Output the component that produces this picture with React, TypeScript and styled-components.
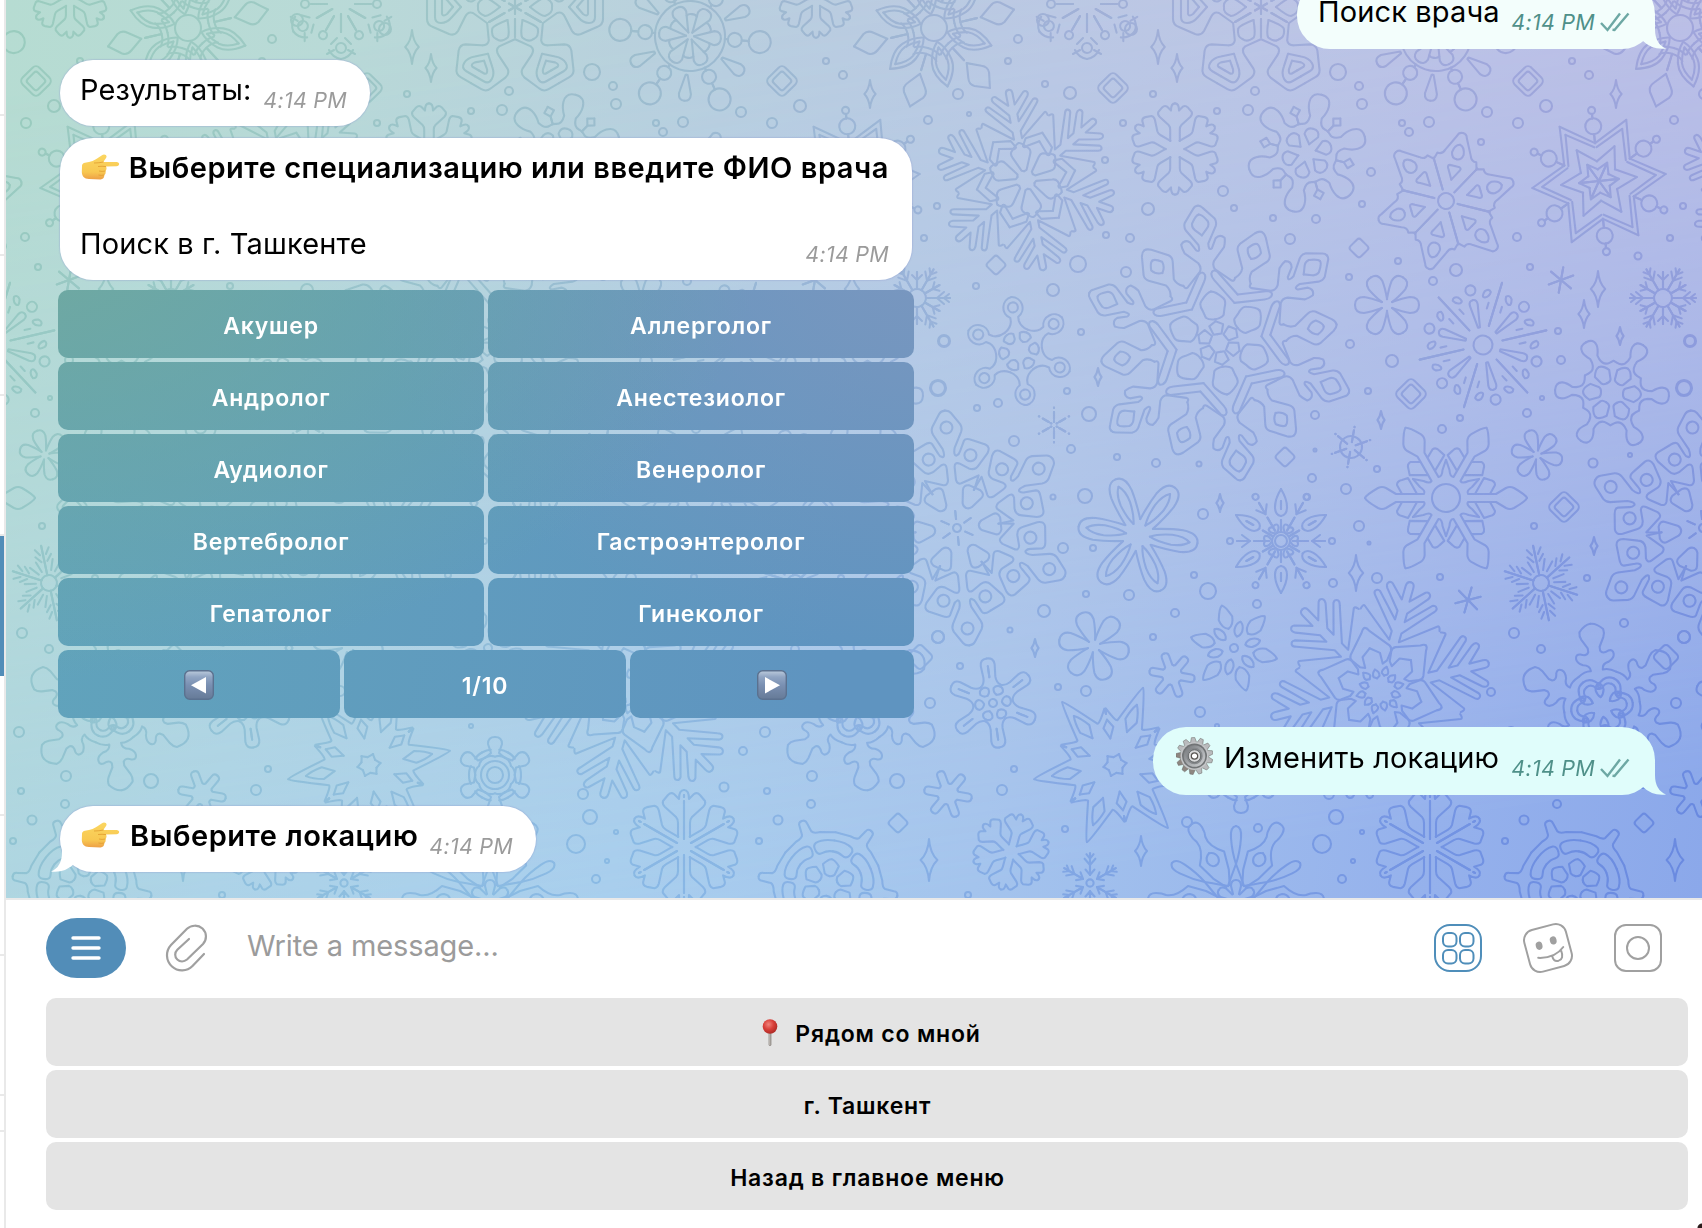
import React from "react";
import styled, { createGlobalStyle } from "styled-components";

const GlobalStyle = createGlobalStyle`
  * {
    box-sizing: border-box;
  }

  body {
    margin: 0;
    background: #fff;
    font-family: Inter, "Liberation Sans", sans-serif;
    color: #000;
  }
`;

/* ---------- wallpaper ---------- */

type Ring = [number, number];

type FlakeData = {
  at: [number, number];
  rot?: number;
  s?: number;
  // half of an arm that points up, mirrored to get the other half
  arm?: string;
  // same, but for the gap between two arms
  gap?: string;
  armRings?: Ring[];
  gapRings?: Ring[];
  core?: number[];
};

const BRANCH =
  "M0-57Q-5-57-5-48L-10-53Q-13-55-16-52L-21-46Q-22-43-19-40L-8-30Q-6-28-6-24V-10";
const FERN =
  "M0-112Q-4-112-4-107V-93L-17-106Q-20-108-22-105Q-23-103-21-100L-5-81V-72L-27-95Q-30-97-32-94Q-33-92-30-89L-5-60V-51L-38-77Q-40-78-41-73";
const PETAL = "M0-32Q-8-32-8-23Q-7-16-3-5";
const BLOB = "M0-24Q-4-24-4-20L-4-10L-5-9";
const MINI = "M0-9V-33M0-20L-6-27M0-27L-4-32";
const STICK = "M0 0V-13";

const FLAKES: FlakeData[] = [
  {
    at: [1261, 7],
    rot: 30,
    arm: "M0-88L-12-88Q-18-88-20-82L-27-66Q-29-60-24-57L-10-50Q-4-47-6-42L-16-28M0-80H-10Q-16-80-16-74Q-16-68-10-63L0-54M0-73H-7Q-10-72-7-68L0-62M0-37Q-6-38-9-30Q-9-26 0-15",
    gap: "M0-12V-30M0 0V-7",
  },
  {
    at: [1436, 36],
    rot: 35,
    arm: "M0-31Q-7-31-7-24L0-4M0-52V-59M0-35V-38",
    gap: "M0-65Q-6-65-6-58L-1-39H0M0-22Q-4-22-5-20",
    armRings: [
      [-45, 7],
      [-70, 11],
    ],
    core: [35],
  },
  {
    at: [934, 28],
    rot: 47,
    arm: "M0-60Q-12-46-10-34Q-8-22 0-14M0-53Q-7-43-6-34Q-4-26 0-20",
    gap: "M0-82L-10-70Q-13-65-9-60L0-48M0-44V-28M0-27Q-8-27-12-31M0-21Q-8-21-13-24",
    core: [13],
  },
  { at: [1175, 149], rot: 0, s: 0.8, arm: BRANCH },
  {
    at: [1307, 153],
    rot: 14,
    arm: "M0-60Q-10-60-10-50Q-10-44-6-37Q-6-28-12-27L-15-26M0-25Q-7-25-7-18L0-9",
    gap: "M0-30V-38M0-48L-5-43L0-38",
  },
  {
    at: [1446, 201],
    rot: 14,
    arm: "M0-70Q-4-70-5-66L-13-50Q-15-44-20-45L-22-38M0-58Q-5-57-6-49Q-5-43 0-43M0-36H-5Q-8-35-5-31L0-22",
    gap: "M0-12V-45",
    core: [8],
  },
  {
    at: [1599, 181],
    rot: 24,
    arm: "M0-67L-19-33M0-57L-16-30M0-38L-10-17M0-20L-6-10M0-20V0",
    gap: "M0-38V-47M0-63V-67",
    gapRings: [
      [-55, 8],
      [-71, 3.5],
    ],
  },
  {
    at: [1219, 343],
    rot: -9,
    arm: "M0-139Q-3-139-5-136L-15-124Q-17-120-15-116L-5-100Q-4-92-8-95L-13-104Q-18-108-22-103Q-22-99-20-94L-8-82Q-5-77-8-73L-22-60Q-25-58-26-62M0-130Q-3-130-8-122Q-9-118-6-115L0-109M0-52Q-4-52-11-44Q-14-41-11-34L-9-27Q-6-24 0-24M0-22L-7-18L-4-9H0",
    gap: "M0-119Q-3-119-6-115L-16-100Q-18-96-15-92L-5-78Q-4-72-8-67M0-106Q-3-106-7-99Q-6-93 0-90M0-52L-27-66Q-33-67-32-62Q-31-59-27-57L0-43",
  },
  { at: [1387, 305], rot: 30, arm: PETAL },
  {
    at: [1483, 345],
    rot: 17,
    arm: "M0-20V-65M-7-36V-42M-12-46Q-16-45-14-52Q-11-56-8-53Q-8-48-12-46",
    gap: "M0-46Q-4-46-4-41L-1-18H0",
    gapRings: [[-56, 5]],
    core: [9.5],
  },
  { at: [1561, 280], rot: 10, arm: STICK },
  { at: [1663, 298], rot: 30, arm: MINI, gap: "M0-9V-26M0-18L-5-23", core: [9] },
  {
    at: [1612, 393],
    rot: 33,
    arm: "M0-57Q-8-57-8-50Q-8-46-4-40V-36Q-5-28-12-28L-16-28M0-29Q-4-29-8-22L-5-13Q-4-11 0-11",
  },
  {
    at: [1019, 351],
    rot: -8,
    arm: "M0-54.5A11 11 0 0 0-4-34V-30Q-5-24-11.5-20",
    gap: "M0-20Q-4-20-6-17L-4-12Q-2-10 0-10",
    armRings: [[-44, 5]],
  },
  { at: [1054, 425], arm: "M0-3V-4M0-6V-13M0-17V-17.5" },
  {
    at: [957, 528],
    rot: -6,
    arm: "M0-118Q-4-118-6-115L-14-103Q-16-99-14-95L-6-80Q-4-72-7-72Q-10-73-11-76L-16-86Q-18-89-24-86L-37-80Q-42-77-38-71L-28-60Q-24-55-18-58L-9-64Q-4-66-4-60V-48Q-5-43-9-44L-27-50L-21-36M-27-71A6 6 0 0 0-15-71A6 6 0 0 0-27-71M0-9V-17",
    gap: "M0-44H-6Q-12-42-10-37L-5-25Q-3-22 0-22",
    armRings: [[-101, 6]],
    core: [4],
  },
  {
    at: [1138, 535],
    rot: 38,
    arm: "M0-60Q-10-60-11-44Q-11-32-8-14M0-52Q-5-46-5-34Q-4-20 0-12",
  },
  {
    at: [1281, 541],
    arm: "M0-52Q-6-42-6-34Q-6-26 0-25M0-40V-32M0-10V-21",
    gap: "M0-12V-27M0-31V-44M0-31L-6-39M0-9Q-6-12-5-16Q-3-18 0-16",
    gapRings: [[-51, 3]],
    core: [6, 9],
  },
  {
    at: [1446, 498],
    rot: 30,
    arm: "M0-81Q-3-80-10-68Q-12-64-10-60L-4-50V-44L-13-49Q-17-49-18-44L-20-38L-4-29V-22Q-7-20-11-26L-19-33M-4-29V-44",
    core: [14],
  },
  { at: [1537, 455], rot: -18, s: 0.8, arm: PETAL },
  {
    at: [1541, 583],
    rot: -12,
    arm: "M0-8V-38M-3-22L-8-28M-3-29L-7-35",
    gap: "M-2-13L-4-24",
    core: [8],
  },
  { at: [1351, 447], rot: 10, arm: "M0-5V-17M0-20V-20.5", core: [11] },
  {
    at: [1380, 690],
    rot: 16,
    arm: FERN + "M0-24Q-4-20-3-17L0-15",
    gap: "M0-64Q-2-64-4-60L-20-41Q-22-38-20-35L-14-27L-9-25L-9-36L0-43M0-21Q-4-18-3-14L0-12",
  },
  {
    at: [1026, 180],
    rot: -11,
    s: 0.82,
    arm: FERN + "M0-46Q-3-46-11-37Q-13-34-11-30L-3-12L0-11",
    gap: "M0-61L-17-48V-38Q-14-36-12-40L0-50",
  },
  {
    at: [1602, 707],
    rot: -8,
    arm: "M0-84Q-6-84-12-77Q-13-73-11-69L-6-60V-56Q-8-52-14-55Q-19-56-19-51Q-19-47-13-44Q-6-43-6-37Q-12-38-19-33M0-24Q-4-22-4-17Q-3-12 0-10",
    gap: "M0-31Q-10-31-12-18Q-9-14-7-18Q-6-25 0-25",
  },
  { at: [1094, 646], rot: -20, s: 1.1, arm: PETAL },
  {
    at: [1234, 648],
    rot: -16,
    arm: "M0-44Q-3-43-7-31Q-6-22 0-20",
    gap: "M0-27Q-4-25-4-18Q-3-13 0-12",
    core: [4],
  },
  { at: [1172, 675], rot: -20, s: 0.95, arm: BLOB },
  { at: [1468, 600], rot: 16, arm: STICK },
  {
    at: [993, 703],
    rot: -8,
    arm: "M0-45Q-7-45-7-38L-6-26Q-6-20-10-17M0-37V-26",
    gap: "M0-18Q-4-18-5-14Q-4-10 0-9",
    core: [4],
  },
  {
    at: [1115, 765],
    rot: 20,
    arm: "M0-82Q-2-81-13-43Q-14-41-28-50L-26-45M0-64Q-4-58-6-47L0-35",
    gap: "M0-46L-5-38L0-27M0-8L-6-10M0-52V-53",
  },
  { at: [948, 794], rot: -20, arm: BLOB },
  { at: [1430, 847], arm: BRANCH + "M0-50V-52M0-46V-8" },
  {
    at: [1574, 886],
    rot: -22,
    arm: "M0-70Q-4-70-4-66L-5-57Q-6-54-13-53L-27-47",
    gap: "M0-46Q-12-46-18-41Q-21-38-17-33Q-14-29-10-32Q-6-35 0-35M0-27Q-3-27-8-21L-5-12Q-3-10 0-10",
  },
  { at: [1011, 852], rot: 15, s: 0.68, arm: BRANCH },
  { at: [1090, 883], s: 0.9, arm: MINI + "M0-9L-5-15", core: [4] },
  {
    at: [1236, 900],
    arm: "M0-74Q-6-73-5-62Q-4-48 0-36Q6-20 8-14M0-20Q-5-20-5-14L-3-6",
    gap: "M0-88Q-7-88-7-80Q-7-74-5-70Q-3-60-14-48L-9-30L-2-16M0-54Q-6-52-6-46Q-5-40 0-40",
  },
  {
    at: [1241, 775],
    arm: "M0-38Q-7-38-7-31L-4-22L-10-17",
    gap: "M0-26Q-6-26-9-24M0-20Q-6-20-9-16",
    core: [8, 14],
  },
  { at: [1562, -1], rot: 0, s: 0.68, arm: BRANCH },
  {
    at: [1087, 4],
    rot: 0,
    arm: "M0-10V-28M-4-34L-10-40M-7-46L-14-50M0-55Q-8-54-12-46",
    gap: "M0-14V-30",
    armRings: [[-44, 5]],
    gapRings: [[-36, 4]],
  },
];

// [x, y, half height]
const SPARKS = [
  [1158, 47, 17], [1177, 68, 14], [1616, 94, 14], [1598, 289, 18], [1584, 314, 14],
  [1620, 336, 9], [1098, 377, 9], [1220, 503, 9], [1035, 648, 9], [1381, 420, 9],
  [1594, 546, 9], [1356, 573, 18], [929, 860, 21], [1141, 851, 15],
];

// [x, y, half diagonal, doubled]
const TILES = [
  [1528, 81, 16, 1], [1113, 88, 16, 1], [1411, 394, 16, 1], [1564, 507, 16, 1],
  [1359, 248, 10, 0], [1644, 823, 10, 0], [1285, 457, 10, 0], [920, 657, 13, 0],
  [996, 265, 10, 0],
];

// [x, y, radius]
const DOTS = [
  [1338, 72, 8], [1359, 86, 4], [1362, 104, 5], [1255, 91, 4], [1153, 94, 3],
  [1123, 123, 3], [1217, 111, 3], [1248, 110, 5], [1487, 112, 5], [1518, 123, 5],
  [1546, 106, 6], [1429, 122, 5], [1402, 123, 3], [1409, 132, 4], [1481, 142, 3],
  [1572, 61, 3], [1589, 75, 4], [1371, 172, 4], [1362, 204, 3], [1316, 219, 4],
  [1273, 218, 3], [1234, 208, 3], [1223, 191, 5], [1148, 209, 6], [1290, 239, 5],
  [1398, 261, 3], [1456, 270, 6], [1433, 281, 4], [1349, 277, 3], [1517, 237, 4],
  [1530, 267, 3], [1638, 256, 3.5], [1350, 344, 4], [1392, 361, 6], [1368, 391, 3],
  [1558, 331, 3], [1561, 360, 4], [1690, 341, 6], [1684, 388, 8], [1126, 272, 5],
  [1130, 238, 4], [1106, 235, 3], [1105, 160, 3], [1131, 29, 6], [958, 94, 5],
  [928, 120, 4], [969, 114, 2], [1008, 61, 3], [1018, 39, 4], [1043, 20, 6],
  [1045, 84, 3], [1070, 93, 6], [937, 206, 3], [924, 238, 3], [976, 286, 3],
  [1053, 290, 6], [1078, 264, 8], [944, 341, 5], [1081, 332, 3], [1067, 391, 3],
  [938, 388, 7], [977, 408, 3], [998, 403, 4], [1089, 414, 7], [1014, 441, 5],
  [1071, 449, 4], [1117, 457, 3], [1156, 463, 4], [1199, 464, 2.5], [1053, 497, 2.5],
  [1085, 496, 7], [1063, 548, 5], [1093, 548, 3], [1203, 514, 5], [1194, 575, 3],
  [1208, 591, 8], [1086, 594, 3], [1129, 595, 5], [1044, 611, 6], [1010, 630, 2.5],
  [1175, 613, 4], [1257, 604, 4], [1153, 637, 3], [938, 637, 6], [960, 666, 3],
  [1315, 415, 4], [1442, 429, 4], [1460, 418, 3], [1527, 413, 4], [1542, 398, 2],
  [1593, 463, 4.5], [1630, 455, 2], [1377, 469, 3], [1315, 450, 1.5], [1312, 478, 4],
  [1346, 489, 5], [1307, 497, 3], [1359, 526, 5], [1369, 543, 1.5], [1377, 578, 5],
  [1333, 583, 4], [1440, 577, 3], [1534, 526, 3], [1587, 578, 3], [1514, 633, 5],
  [1541, 649, 4], [1624, 623, 4], [1684, 637, 6], [1491, 692, 4], [930, 703, 5],
  [1489, 751, 4], [1470, 787, 4.5], [1513, 791, 3], [1557, 804, 4], [1558, 776, 5],
  [897, 781, 7], [1524, 820, 4.5], [1505, 841, 3], [1329, 794, 5], [1336, 817, 7],
  [1322, 844, 9], [1362, 832, 2], [1353, 861, 2], [1342, 879, 4], [1002, 790, 5],
  [1014, 769, 3], [1058, 687, 3], [1086, 691, 5], [1065, 829, 3], [968, 895, 3],
  [1187, 822, 5], [1258, 828, 4], [1200, 712, 5], [1217, 726, 2], [1511, 732, 5],
];

const ANGLES = [0, 60, 120, 180, 240, 300];

const Flake = ({ at, rot = 0, s = 1, arm, gap, armRings, gapRings, core }: FlakeData) => (
  <g transform={`translate(${at[0]} ${at[1]}) rotate(${rot}) scale(${s})`}>
    {core?.map((r) => <circle key={r} r={r} />)}
    {ANGLES.map((a) => (
      <g key={a} transform={`rotate(${a})`}>
        {arm && <path d={arm} />}
        {arm && <path d={arm} transform="scale(-1 1)" />}
        {armRings?.map(([y, r]) => <circle key={y} cy={y} r={r} />)}
        <g transform="rotate(30)">
          {gap && <path d={gap} />}
          {gap && <path d={gap} transform="scale(-1 1)" />}
          {gapRings?.map(([y, r]) => <circle key={y} cy={y} r={r} />)}
        </g>
      </g>
    ))}
  </g>
);

const Tile = ({ x, y, d }: { x: number; y: number; d: number }) => (
  <rect
    x={x - d * 0.74}
    y={y - d * 0.74}
    width={d * 1.48}
    height={d * 1.48}
    rx={d * 0.3}
    transform={`rotate(45 ${x} ${y})`}
  />
);

const Snow = styled.svg`
  position: absolute;
  inset: 0;
  width: 1696px;
  height: 898px;
  fill: none;
  stroke: #000;
  stroke-width: 2.1;
  stroke-linecap: round;
  stroke-linejoin: round;
  opacity: 0.54;
  mix-blend-mode: soft-light;

  path,
  circle {
    vector-effect: non-scaling-stroke;
  }
`;

const SnowPattern = () => (
  <Snow viewBox="6 0 1696 898">
    <defs>
      <g id="snow">
        {FLAKES.map((f, i) => (
          <Flake key={i} {...f} />
        ))}
        {SPARKS.map(([x, y, h], i) => (
          <path
            key={i}
            d={`M${x} ${y - h}Q${x + 1} ${y - h / 3} ${x + h * 0.4} ${y}Q${x + 1} ${y + h / 3} ${x} ${y + h}Q${x - 1} ${y + h / 3} ${x - h * 0.4} ${y}Q${x - 1} ${y - h / 3} ${x} ${y - h}Z`}
          />
        ))}
        {TILES.map(([x, y, d, twice], i) => (
          <g key={i}>
            <Tile x={x} y={y} d={d} />
            {twice ? <Tile x={x} y={y} d={d * 0.62} /> : null}
          </g>
        ))}
        {DOTS.map(([x, y, r], i) => (
          <circle key={i} cx={x} cy={y} r={r} />
        ))}
      </g>
    </defs>
    <use href="#snow" />
    <use href="#snow" x={-746} />
    <use href="#snow" x={-1492} />
    <use href="#snow" x={746} />
  </Snow>
);

/* ---------- emoji ---------- */

const Hand = () => (
  <svg width="39" height="26" viewBox="0 0 39 26">
    <defs>
      <linearGradient id="skin" x1="0" y1="0" x2="0" y2="1">
        <stop offset="0" stopColor="#fbd661" />
        <stop offset="0.7" stopColor="#f8c851" />
        <stop offset="1" stopColor="#eda046" />
      </linearGradient>
    </defs>
    <path
      d="M1 12C1 9 4 8.500 8 8C13 7 17 4 21 1.200C23-.2 26 .8 25.500 3C25 5 23 6 22.500 8H35.500C39 8 39 12.200 35.500 12.200L25 12.600C26 14.500 25.500 16 24.500 17C25 19 24.300 20.300 23.300 21C23.300 24 22 25.300 19.500 25.400L8 25C3 25 1 22 .8 18Z"
      fill="url(#skin)"
    />
    <path
      d="M17 12.500Q21 12 25 12.600M18 17Q21 17.800 24.500 17M17.500 21Q20 21.800 23.300 21M13 9Q18 9 22.500 8"
      fill="none"
      stroke="#e3a032"
      strokeWidth="0.9"
    />
  </svg>
);

const Gear = () => (
  <svg width="37" height="38" viewBox="-18.500 -19 37 38">
    <defs>
      <linearGradient id="steel" x1="0" y1="0" x2="1" y2="1">
        <stop offset="0" stopColor="#707376" />
        <stop offset="0.55" stopColor="#a9acaf" />
        <stop offset="1" stopColor="#d0d2d4" />
      </linearGradient>
    </defs>
    {Array.from({ length: 13 }, (_, i) => (
      <path
        key={i}
        d="M-3.200-13L-1.800-18.500H1.500L3.200-13Z"
        fill={i > 6 && i < 11 ? "#8d8680" : "#b9bbbd"}
        stroke="#6d6a68"
        strokeWidth="0.5"
        transform={`rotate(${(i * 360) / 13 - 4})`}
      />
    ))}
    <circle r="14" fill="#c3c5c7" />
    <circle r="12.500" fill="#717476" />
    <circle r="10.800" fill="url(#steel)" />
    <circle r="8.200" fill="#85888b" />
    <circle r="6.200" fill="#d9dadb" stroke="#56595b" strokeWidth="0.8" />
    <circle r="3.200" fill="#fff" stroke="#57534f" strokeWidth="1.200" />
  </svg>
);

const PinSvg = styled.svg`
  margin: -3px 0 0 8px;
`;

const Pin = () => (
  <PinSvg width="16" height="28" viewBox="0 0 16 28">
    <defs>
      <radialGradient id="ball" cx="0.4" cy="0.35" r="0.7">
        <stop offset="0" stopColor="#f0837b" />
        <stop offset="0.5" stopColor="#d9403a" />
        <stop offset="1" stopColor="#a92823" />
      </radialGradient>
    </defs>
    <path d="M6.600 13H9.400V26Q8 28 6.600 26Z" fill="#8f8a85" />
    <path d="M7.300 14H8.300V26H7.300Z" fill="#c9c4be" />
    <circle cx="8" cy="7.500" r="7.300" fill="url(#ball)" />
  </PinSvg>
);

const ArrowSvg = styled.svg`
  margin-top: -2px;
`;

const ArrowKey = ({ back }: { back?: boolean }) => (
  <ArrowSvg width="30" height="30" viewBox="0 0 30 30">
    <defs>
      <linearGradient id="key" x1="0" y1="0" x2="0" y2="1">
        <stop offset="0" stopColor="#bccbdc" />
        <stop offset="0.22" stopColor="#90a5c3" />
        <stop offset="0.5" stopColor="#7a90b2" />
        <stop offset="1" stopColor="#667a97" />
      </linearGradient>
    </defs>
    <rect x="0.700" y="0.700" width="28.600" height="28.600" rx="5" fill="url(#key)" stroke="#5b718f" strokeWidth="1.400" />
    <path d={back ? "M22 7V23.500L7 15.200Z" : "M8 7V23.500L23 15.200Z"} fill="#fff" />
  </ArrowSvg>
);

/* ---------- layout ---------- */

const Window = styled.div`
  display: grid;
  grid-template-columns: 6px 1fr;
  width: 1702px;
  height: 1228px;
  overflow: hidden;
  background: radial-gradient(circle at 100% 100%, #2b1c1c 0 4px, transparent 5px) #fff;
`;

const Sidebar = styled.div`
  display: flex;
  flex-direction: column;
  border-right: 2px solid #e9e9e9;
`;

const SidebarRow = styled.div<{ $h: number; $active?: boolean }>`
  flex: none;
  height: ${(p) => p.$h}px;
  background: ${(p) => (p.$active ? "#528db8" : "transparent")};
  border-bottom: 2px solid ${(p) => (p.$active ? "#528db8" : "#e9e9e9")};
`;

const Main = styled.main`
  display: flex;
  flex-direction: column;
  min-width: 0;
`;

const Chat = styled.section`
  position: relative;
  isolation: isolate;
  flex: none;
  height: 898px;
  overflow: hidden;
  background: linear-gradient(
    98deg,
    #b6dcd2 0,
    #b9dad7 18%,
    #bacfdf 40%,
    #bdc9e4 58%,
    #c1c4e6 80%,
    #c4c2e6 100%
  );

  /* lower colours of the mesh, faded in towards the bottom */
  &::before {
    content: "";
    position: absolute;
    inset: 0;
    background: linear-gradient(98deg, #aed6e0 0, #abd2ea 18%, #a7ceee 40%, #a4c4ed 60%, #95b1ec 85%, #8ba8ea 100%);
    mask-image: linear-gradient(172deg, transparent 8%, rgba(0, 0, 0, 0.43) 50%, #000 90%);
  }
`;

const Messages = styled.div`
  position: relative;
  display: flex;
  flex-direction: column;
  align-items: flex-start;
  gap: 11px;
  margin-top: -19px;
  padding: 0 47px 0 54px;
`;

const Bubble = styled.div<{ $out?: string; $w: number; $shift?: number }>`
  position: relative;
  display: flex;
  flex-direction: column;
  width: ${(p) => p.$w}px;
  margin-top: ${(p) => p.$shift ?? 0}px;
  padding: ${(p) => (p.$out ? "12px 25px 18px 21px" : "11px 23px 17px 20px")};
  align-self: ${(p) => (p.$out ? "flex-end" : "flex-start")};
  border-radius: 33px;
  background: ${(p) => p.$out ?? "#fff"};
  box-shadow: ${(p) => (p.$out ? "none" : "0 0 1px 1px rgba(150, 160, 210, 0.35)")};
`;

const Line = styled.div<{ $bold?: boolean }>`
  display: flex;
  align-items: flex-end;
  height: 38px;
  line-height: 38px;
  font-size: 29px;
  font-weight: ${(p) => (p.$bold ? 600 : 400)};
  letter-spacing: ${(p) => (p.$bold ? 0.54 : 0.13)}px;
  white-space: nowrap;

  svg {
    flex: none;
  }
`;

const EmojiSlot = styled.span<{ $lift: number; $inset?: number }>`
  display: flex;
  width: 50px;
  margin-bottom: ${(p) => p.$lift}px;
  padding-left: ${(p) => p.$inset ?? 0}px;
`;

const Time = styled.span<{ $out?: boolean }>`
  display: flex;
  align-items: center;
  gap: 5px;
  margin: 0 0 -4px auto;
  line-height: 26px;
  font-size: 21.5px;
  font-weight: 400;
  font-style: italic;
  letter-spacing: 0.25px;
  color: ${(p) => (p.$out ? "#4f9089" : "#9b9b9b")};
`;

const TailShape = styled.svg<{ $out?: boolean }>`
  position: absolute;
  bottom: 0;
  ${(p) => (p.$out ? "right: -11px;" : "left: -9px; transform: scaleX(-1);")}
  width: 34px;
  height: 32px;
`;

const Tail = ({ fill, out }: { fill: string; out?: boolean }) => (
  <TailShape viewBox="0 0 34 32" $out={out}>
    <path d="M23 0V12Q23 27 34 31.500Q20 33 11 24L0 8Z" fill={fill} />
  </TailShape>
);

const Checks = () => (
  <svg width="30" height="20" viewBox="0 0 30 20" fill="none" stroke="#6da8a4" strokeWidth="2.400">
    <path d="M1 11L7.500 18L20 1.500M12.500 17.800L14.500 18L28.500 1.500" />
  </svg>
);

const Keyboard = styled.div`
  display: flex;
  flex-direction: column;
  gap: 4px;
  width: 856px;
  margin: -1px 0 0 -2px;
`;

const KeyRow = styled.div<{ $cols?: string }>`
  display: grid;
  grid-template-columns: ${(p) => p.$cols ?? "1fr 1fr"};
  gap: 4px;
`;

const Key = styled.button`
  display: flex;
  align-items: center;
  justify-content: center;
  height: 68px;
  padding: 4px 0 0;
  border: 0;
  border-radius: 10px;
  background:
    radial-gradient(ellipse 760px 440px at 0 240px, #70a99f 0, #70a99f00 100%) fixed,
    radial-gradient(ellipse 600px 420px at 960px 240px, #7c97bf 0, #7c97bf00 100%) fixed,
    linear-gradient(100deg, #61a5bb 60px, #5f94c0 930px) fixed;
  color: #fff;
  font: 600 23px Inter, "Liberation Sans", sans-serif;
  letter-spacing: 0.8px;
`;

const Composer = styled.footer`
  display: flex;
  flex: 1;
  flex-direction: column;
  gap: 20px;
  padding: 18px 14px 18px 40px;
  border-top: 2px solid #e9e9e9;
`;

const InputRow = styled.div`
  display: flex;
  align-items: center;
  height: 60px;
  padding-right: 26px;
`;

const MenuButton = styled.button`
  display: flex;
  align-items: center;
  justify-content: center;
  width: 80px;
  height: 60px;
  padding: 0;
  border: 0;
  border-radius: 31px / 30px;
  background: #528db8;
`;

const ClipIcon = styled.svg`
  margin-left: 39px;
`;

const Placeholder = styled.span`
  flex: 1;
  margin: -6px 0 0 39px;
  color: #9b9b9b;
  font-size: 29px;
  letter-spacing: -0.1px;
`;

const Tools = styled.div`
  display: flex;
  align-items: center;
  gap: 38px;
`;

const ReplyKeys = styled.div`
  display: flex;
  flex-direction: column;
  gap: 4px;
`;

const ReplyKey = styled.button`
  display: flex;
  align-items: center;
  justify-content: center;
  gap: 17px;
  height: 68px;
  padding: 4px 0 0 1px;
  border: 0;
  border-radius: 10px;
  background: #e4e4e4;
  color: #000;
  font: 600 23px Inter, "Liberation Sans", sans-serif;
  letter-spacing: 0.8px;
`;

const SPECIALTIES = [
  ["Акушер", "Аллерголог"],
  ["Андролог", "Анестезиолог"],
  ["Аудиолог", "Венеролог"],
  ["Вертебролог", "Гастроэнтеролог"],
  ["Гепатолог", "Гинеколог"],
];

const HandSlot = () => (
  <EmojiSlot $lift={7} $inset={1}>
    <Hand />
  </EmojiSlot>
);

export default function App() {
  return (
    <>
      <GlobalStyle />
      <Window>
        <Sidebar>
          <SidebarRow $h={116} />
          <SidebarRow $h={140} />
          <SidebarRow $h={140} />
          <SidebarRow $h={140} />
          <SidebarRow $h={140} $active />
          <SidebarRow $h={140} />
          <SidebarRow $h={140} />
          <SidebarRow $h={140} />
          <SidebarRow $h={36} />
        </Sidebar>
        <Main>
          <Chat>
            <SnowPattern />
            <Messages>
              <Bubble $out="#f3fefc" $w={358}>
                <Line>
                  <span>Поиск врача</span>
                  <Time $out>
                    4:14 PM <Checks />
                  </Time>
                </Line>
                <Tail fill="#f3fefc" out />
              </Bubble>
              <Bubble $w={310}>
                <Line>
                  <span>Результаты:</span>
                  <Time>4:14 PM</Time>
                </Line>
              </Bubble>
              <Bubble $w={852} $shift={1}>
                <Line $bold>
                  <HandSlot />
                  <span>Выберите специализацию или введите ФИО врача</span>
                </Line>
                <Line />
                <Line>
                  <span>Поиск в г. Ташкенте</span>
                  <Time>4:14 PM</Time>
                </Line>
              </Bubble>
              <Keyboard>
                {SPECIALTIES.map((row) => (
                  <KeyRow key={row[0]}>
                    {row.map((name) => (
                      <Key key={name}>{name}</Key>
                    ))}
                  </KeyRow>
                ))}
                <KeyRow $cols="282px 282px 1fr">
                  <Key>
                    <ArrowKey back />
                  </Key>
                  <Key>1/10</Key>
                  <Key>
                    <ArrowKey />
                  </Key>
                </KeyRow>
              </Keyboard>
              <Bubble $out="#e0fdfb" $w={502} $shift={-2}>
                <Line>
                  <EmojiSlot $lift={2} $inset={2}>
                    <Gear />
                  </EmojiSlot>
                  <span>Изменить локацию</span>
                  <Time $out>
                    4:14 PM <Checks />
                  </Time>
                </Line>
                <Tail fill="#e0fdfb" out />
              </Bubble>
              <Bubble $w={476}>
                <Line $bold>
                  <HandSlot />
                  <span>Выберите локацию</span>
                  <Time>4:14 PM</Time>
                </Line>
                <Tail fill="#fff" />
              </Bubble>
            </Messages>
          </Chat>
          <Composer>
            <InputRow>
              <MenuButton>
                <svg width="30" height="24" stroke="#fff" strokeWidth="3.400" strokeLinecap="round">
                  <path d="M2 2H28M2 12H28M2 22H28" />
                </svg>
              </MenuButton>
              <ClipIcon width="43" height="48" viewBox="165 924 43 48" fill="none" stroke="#a0a0a0" strokeWidth="2.200" strokeLinecap="round">
                <path d="M204 954L192.500 966C187 971.500 178 972 172 966.500C165.500 960.500 165.500 951 171 945L187 928.800C191 925 198 924.500 202.500 928.500C207 933 207 939.500 203 944L187 959.500C184 962 180 962 177.300 959.500C174.500 957 174.500 952.500 177.300 949.800L189 939" />
              </ClipIcon>
              <Placeholder>Write a message...</Placeholder>
              <Tools>
                <svg width="48" height="48" fill="none" stroke="#4f8eba" strokeWidth="2">
                  <rect x="1" y="1" width="46" height="46" rx="15" />
                  <rect x="9" y="9" width="13.500" height="13.500" rx="5" />
                  <rect x="26" y="9" width="13.500" height="13.500" rx="5" />
                  <rect x="9" y="26" width="13.500" height="13.500" rx="5" />
                  <rect x="26" y="26" width="13.500" height="13.500" rx="5" />
                </svg>
                <svg width="56" height="52" viewBox="-28 -26 56 52" fill="none" stroke="#a0a0a0" strokeWidth="2">
                  <g transform="rotate(-15)">
                    <rect x="-21.500" y="-21.500" width="43" height="43" rx="10.500" />
                    <ellipse cx="-8" cy="-4.500" rx="2.600" ry="3.400" fill="#a0a0a0" strokeWidth="1.500" />
                    <ellipse cx="7" cy="-6" rx="2.600" ry="3.400" fill="#a0a0a0" strokeWidth="1.500" />
                    <path d="M-12 7Q4 12 15 3M2 9.500Q2 15 7 15Q13 14.500 12 6" strokeLinecap="round" />
                  </g>
                </svg>
                <svg width="48" height="48" fill="none" stroke="#a0a0a0" strokeWidth="2">
                  <rect x="1" y="1" width="46" height="46" rx="11" />
                  <circle cx="24" cy="24" r="11" />
                </svg>
              </Tools>
            </InputRow>
            <ReplyKeys>
              <ReplyKey>
                <Pin />
                Рядом со мной
              </ReplyKey>
              <ReplyKey>г. Ташкент</ReplyKey>
              <ReplyKey>Назад в главное меню</ReplyKey>
            </ReplyKeys>
          </Composer>
        </Main>
      </Window>
    </>
  );
}
